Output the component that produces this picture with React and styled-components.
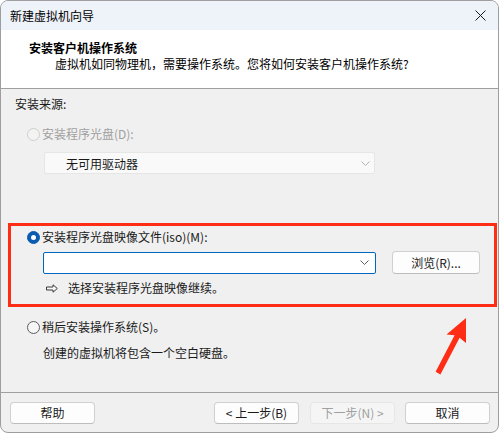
import React from "react";
import styled, { createGlobalStyle } from "styled-components";

const Global = createGlobalStyle`
  html, body { margin: 0; padding: 0; background: #ffffff; }
  * { box-sizing: border-box; }
  body {
    font-family: "Noto Sans CJK SC", "Noto Sans", "Liberation Sans", sans-serif;
    font-size: 12px;
    color: #1a1a1a;
  }
`;

const Window = styled.div`
  position: relative;
  width: 499px;
  height: 433px;
  border: 1px solid #9e9e9e;
  border-radius: 8px;
  overflow: hidden;
  display: flex;
  flex-direction: column;
  background: #f0f0f0;
`;

const TitleBar = styled.div`
  height: 29px;
  flex: none;
  display: flex;
  align-items: center;
  justify-content: space-between;
  padding: 0 12px 0 9px;
  background: #eef2f9;
  line-height: 16px;
  color: #000;
`;

const CloseIcon = styled.svg`
  width: 11px;
  height: 11px;
  display: block;
`;

const Header = styled.div`
  height: 59px;
  flex: none;
  background: #ffffff;
  border-bottom: 1px solid #a0a0a0;
  padding-top: 10px;
`;

const HeaderTitle = styled.div`
  padding-left: 28px;
  font-weight: 700;
  line-height: 16px;
  color: #000;
`;

const HeaderSub = styled.div`
  padding-left: 54px;
  line-height: 15px;
  color: #000;
`;

const Body = styled.div`
  flex: 1;
  display: flex;
  flex-direction: column;
  align-items: flex-start;
`;

const Text = styled.div`
  line-height: 16px;
  margin-top: ${(p) => p.$mt || 0}px;
  padding-left: ${(p) => p.$pl || 0}px;
  color: ${(p) => (p.$disabled ? "#a0a0a0" : "#1a1a1a")};
  white-space: nowrap;
`;

const RadioRow = styled.label`
  display: flex;
  align-items: center;
  gap: 2px;
  height: 16px;
  line-height: 16px;
  margin-top: ${(p) => p.$mt || 0}px;
  padding-left: ${(p) => p.$pl || 0}px;
  color: ${(p) => (p.$disabled ? "#a0a0a0" : "#1a1a1a")};
  white-space: nowrap;
`;

const RadioDot = styled.span`
  width: 13px;
  height: 13px;
  border-radius: 50%;
  flex: none;
  display: flex;
  align-items: center;
  justify-content: center;
  background: ${(p) => (p.$checked ? "#0a5cb0" : p.$disabled ? "#f3f3f3" : "#f6f6f6")};
  border: 1px solid
    ${(p) => (p.$checked ? "#0a5cb0" : p.$disabled ? "#cfcfcf" : "#5c5c5c")};
  &::after {
    content: "";
    display: ${(p) => (p.$checked ? "block" : "none")};
    width: 5px;
    height: 5px;
    border-radius: 50%;
    background: #ffffff;
  }
`;

const Select = styled.div`
  margin-top: 10px;
  margin-left: 43px;
  width: 331px;
  height: 22px;
  display: flex;
  align-items: center;
  justify-content: space-between;
  padding: 0 4px 0 21px;
  background: #f9f9f9;
  border: 1px solid #e6e6e6;
  border-radius: 2px;
  color: #1a1a1a;
`;

const Chevron = styled.svg`
  width: 9px;
  height: 5px;
  display: block;
`;

const Highlight = styled.div`
  margin-top: 49px;
  margin-left: 7px;
  width: 489px;
  height: 84px;
  border: 3px solid #ff2d16;
  padding-top: 3px;
  display: flex;
  flex-direction: column;
`;

const ComboRow = styled.div`
  display: flex;
  align-items: center;
  margin-top: 6px;
  padding-left: 32px;
  height: 23px;
`;

const Combo = styled.div`
  width: 333px;
  height: 22px;
  display: flex;
  align-items: center;
  justify-content: flex-end;
  padding-right: 6px;
  background: #ffffff;
  border: 1px solid #0067c0;
  border-radius: 2px;
`;

const Button = styled.button`
  width: ${(p) => p.$w || 85}px;
  height: ${(p) => p.$h || 22}px;
  margin-left: ${(p) => p.$ml || 0}px;
  padding: 0;
  font-family: inherit;
  font-size: 12px;
  line-height: 16px;
  border-radius: 4px;
  background: ${(p) => (p.disabled ? "#f5f5f5" : "#fdfdfd")};
  color: ${(p) => (p.disabled ? "#a0a0a0" : "#1a1a1a")};
  border: 1px solid ${(p) => (p.disabled ? "#e6e6e6" : "#d0d0d0")};
  border-bottom-color: ${(p) => (p.disabled ? "#e6e6e6" : "#bdbdbd")};
  white-space: nowrap;
`;

const HintRow = styled.div`
  display: flex;
  align-items: center;
  margin-top: 6px;
  padding-left: 35px;
  height: 16px;
  line-height: 16px;
`;

const HintArrow = styled.svg`
  width: 12px;
  height: 9px;
  margin-right: 10px;
  display: block;
  flex: none;
`;

const Footer = styled.div`
  height: 40px;
  flex: none;
  border-top: 1px solid #a0a0a0;
  display: flex;
  align-items: flex-start;
  padding: 9px 8px 0 9px;
`;

const Spacer = styled.div`
  flex: 1;
`;

const Annotation = styled.svg`
  position: absolute;
  left: 419px;
  top: 309px;
  width: 60px;
  height: 70px;
`;

export default function App() {
  return (
    <>
      <Global />
      <Window>
        <TitleBar>
          <span>新建虚拟机向导</span>
          <CloseIcon viewBox="0 0 11 11">
            <path d="M0.5 0.5 L10.5 10.5 M10.5 0.5 L0.5 10.5" stroke="#1a1a1a" strokeWidth="1" fill="none" />
          </CloseIcon>
        </TitleBar>
        <Header>
          <HeaderTitle>安装客户机操作系统</HeaderTitle>
          <HeaderSub>虚拟机如同物理机，需要操作系统。您将如何安装客户机操作系统?</HeaderSub>
        </Header>
        <Body>
          <Text $mt={7} $pl={14}>安装来源:</Text>
          <RadioRow $mt={14} $pl={26} $disabled>
            <RadioDot $disabled />
            安装程序光盘(D):
          </RadioRow>
          <Select>
            <span>无可用驱动器</span>
            <Chevron viewBox="0 0 9 5">
              <path d="M0.5 0.5 L4.5 4.5 L8.5 0.5" stroke="#b0b0b0" strokeWidth="1" fill="none" />
            </Chevron>
          </Select>
          <Highlight>
            <RadioRow $pl={16}>
              <RadioDot $checked />
              安装程序光盘映像文件(iso)(M):
            </RadioRow>
            <ComboRow>
              <Combo>
                <Chevron viewBox="0 0 9 5">
                  <path d="M0.5 0.5 L4.5 4.5 L8.5 0.5" stroke="#606060" strokeWidth="1" fill="none" />
                </Chevron>
              </Combo>
              <Button $w={88} $h={23} $ml={16}>浏览(R)...</Button>
            </ComboRow>
            <HintRow>
              <HintArrow viewBox="0 0 12 9">
                <path
                  d="M0.5 3 H7 V0.8 L11.3 4.5 L7 8.2 V6 H0.5 Z"
                  stroke="#3a3a3a"
                  strokeWidth="1"
                  fill="#f7f7f7"
                  strokeLinejoin="miter"
                />
              </HintArrow>
              <span>选择安装程序光盘映像继续。</span>
            </HintRow>
          </Highlight>
          <RadioRow $mt={12} $pl={26}>
            <RadioDot />
            稍后安装操作系统(S)。
          </RadioRow>
          <Text $mt={10} $pl={42}>创建的虚拟机将包含一个空白硬盘。</Text>
        </Body>
        <Footer>
          <Button>帮助</Button>
          <Spacer />
          <Button>&lt; 上一步(B)</Button>
          <Button $ml={11} disabled>下一步(N) &gt;</Button>
          <Button $ml={10}>取消</Button>
        </Footer>
        <Annotation viewBox="0 0 60 70">
          <polygon
            points="46,8 46,33 39.6,27.8 20.4,64.4 15.6,61.8 34.6,25.2 26.5,24.5"
            fill="#ff2d16"
          />
        </Annotation>
      </Window>
    </>
  );
}
